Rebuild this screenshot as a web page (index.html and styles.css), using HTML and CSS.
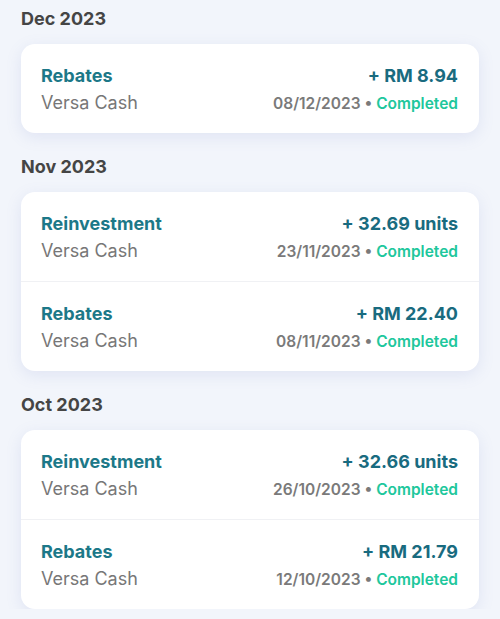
FILE: index.html
```html
<!DOCTYPE html>
<html lang="en">
<head>
    <meta charset="UTF-8">
    <meta name="viewport" content="width=device-width, initial-scale=1.0">
    <title>Transactions</title>
    <link rel="stylesheet" href="styles.css">
</head>
<body>
    <div class="history">
        <h2 class="month">Dec 2023</h2>
        <div class="card">
            <div class="row">
                <div class="line">
                    <span class="type">Rebates</span>
                    <span class="amount">+ RM 8.94</span>
                </div>
                <div class="line">
                    <span class="fund">Versa Cash</span>
                    <span class="meta">08/12/2023 &bull; <span class="status">Completed</span></span>
                </div>
            </div>
        </div>

        <h2 class="month">Nov 2023</h2>
        <div class="card">
            <div class="row">
                <div class="line">
                    <span class="type">Reinvestment</span>
                    <span class="amount">+ 32.69 units</span>
                </div>
                <div class="line">
                    <span class="fund">Versa Cash</span>
                    <span class="meta">23/11/2023 &bull; <span class="status">Completed</span></span>
                </div>
            </div>
            <div class="row">
                <div class="line">
                    <span class="type">Rebates</span>
                    <span class="amount">+ RM 22.40</span>
                </div>
                <div class="line">
                    <span class="fund">Versa Cash</span>
                    <span class="meta">08/11/2023 &bull; <span class="status">Completed</span></span>
                </div>
            </div>
        </div>

        <h2 class="month">Oct 2023</h2>
        <div class="card">
            <div class="row">
                <div class="line">
                    <span class="type">Reinvestment</span>
                    <span class="amount">+ 32.66 units</span>
                </div>
                <div class="line">
                    <span class="fund">Versa Cash</span>
                    <span class="meta">26/10/2023 &bull; <span class="status">Completed</span></span>
                </div>
            </div>
            <div class="row">
                <div class="line">
                    <span class="type">Rebates</span>
                    <span class="amount">+ RM 21.79</span>
                </div>
                <div class="line">
                    <span class="fund">Versa Cash</span>
                    <span class="meta">12/10/2023 &bull; <span class="status">Completed</span></span>
                </div>
            </div>
        </div>
    </div>
</body>
</html>
```

FILE: styles.css
```css
body {
    margin: 0;
    background-color: #f2f5fb;
    font-family: Inter, "Noto Sans", sans-serif;
}
.history {
    padding: 7px 21px 0;
}
.month {
    margin: 22px 0 13px;
    font-size: 18px;
    line-height: 24px;
    font-weight: 700;
    color: #454545;
}
.month:first-child {
    margin-top: 0;
}
.card {
    background-color: white;
    border-radius: 14px;
    box-shadow: 0 4px 16px rgba(110, 130, 200, 0.14);
}
.row {
    padding: 18px 21px 17px 20px;
    border-top: 1px solid #f0f1f4;
}
.row:first-child {
    border-top: none;
}
.line {
    display: flex;
    justify-content: space-between;
    align-items: baseline;
    height: 27px;
    line-height: 27px;
}
.type {
    font-size: 18px;
    font-weight: 700;
    color: #1c7888;
}
.amount {
    font-size: 18px;
    font-weight: 700;
    color: #196b7f;
}
.fund {
    font-size: 18px;
    color: #777777;
}
.meta {
    font-size: 15.5px;
    font-weight: 600;
    color: #7a7a7a;
}
.status {
    color: #20c79c;
}
```
